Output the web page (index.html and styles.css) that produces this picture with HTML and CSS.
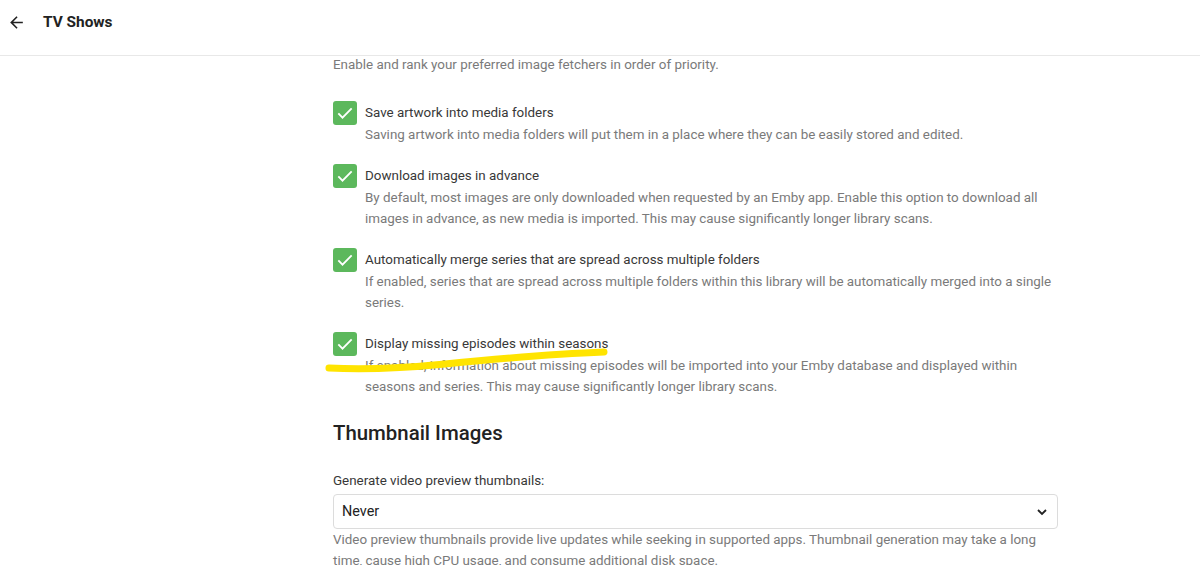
FILE: index.html
```html
<!DOCTYPE html>
<html lang="en">
<head>
    <meta charset="UTF-8">
    <title>TV Shows</title>
    <link rel="stylesheet" href="styles.css">
</head>
<body>
    <header class="topbar">
        <button class="back-btn" aria-label="Back">
            <svg width="19" height="19" viewBox="0 0 24 24"><path d="M20 11H7.83l5.59-5.59L12 4l-8 8 8 8 1.41-1.41L7.83 13H20v-2z" fill="#222"/></svg>
        </button>
        <span class="page-title">TV Shows</span>
    </header>

    <main class="content">
        <p class="intro">Enable and rank your preferred image fetchers in order of priority.</p>

        <div class="options">
            <div class="option">
                <span class="check"><svg width="20" height="20" viewBox="0 0 24 24"><path d="M4 12.5l5 5 11-11" fill="none" stroke="#fff" stroke-width="2.2"/></svg></span>
                <div class="option-text">
                    <div class="option-label">Save artwork into media folders</div>
                    <div class="option-desc">Saving artwork into media folders will put them in a place where they can be easily stored and edited.</div>
                </div>
            </div>
            <div class="option">
                <span class="check"><svg width="20" height="20" viewBox="0 0 24 24"><path d="M4 12.5l5 5 11-11" fill="none" stroke="#fff" stroke-width="2.2"/></svg></span>
                <div class="option-text">
                    <div class="option-label">Download images in advance</div>
                    <div class="option-desc">By default, most images are only downloaded when requested by an Emby app. Enable this option to download all images in advance, as new media is imported. This may cause significantly longer library scans.</div>
                </div>
            </div>
            <div class="option">
                <span class="check"><svg width="20" height="20" viewBox="0 0 24 24"><path d="M4 12.5l5 5 11-11" fill="none" stroke="#fff" stroke-width="2.2"/></svg></span>
                <div class="option-text">
                    <div class="option-label">Automatically merge series that are spread across multiple folders</div>
                    <div class="option-desc">If enabled, series that are spread across multiple folders within this library will be automatically merged into a single series.</div>
                </div>
            </div>
            <div class="option">
                <span class="check"><svg width="20" height="20" viewBox="0 0 24 24"><path d="M4 12.5l5 5 11-11" fill="none" stroke="#fff" stroke-width="2.2"/></svg></span>
                <div class="option-text">
                    <div class="option-label">Display missing episodes within seasons</div>
                    <div class="option-desc">If enabled, information about missing episodes will be imported into your Emby database and displayed within seasons and series. This may cause significantly longer library scans.</div>
                </div>
                <!-- hand-drawn highlight over the option -->
                <svg class="marker" width="300" height="30" viewBox="0 0 300 30"><path d="M4 23 C40 25 80 23 120 19 S220 9 279 7" fill="none" stroke="#ffe400" stroke-width="7" stroke-linecap="round"/></svg>
            </div>
        </div>

        <h2 class="section-title">Thumbnail Images</h2>

        <label class="field-label" for="thumbs">Generate video preview thumbnails:</label>
        <div class="select-wrap">
            <select id="thumbs" class="select">
                <option>Never</option>
            </select>
            <svg class="chevron" width="12" height="12" viewBox="0 0 12 12"><path d="M2 4l4 4 4-4" fill="none" stroke="#222" stroke-width="1.8"/></svg>
        </div>
        <div class="field-desc">Video preview thumbnails provide live updates while seeking in supported apps. Thumbnail generation may take a long time, cause high CPU usage, and consume additional disk space.</div>
    </main>
</body>
</html>
```

FILE: styles.css
```css
* {
    margin: 0;
    padding: 0;
    box-sizing: border-box;
}
body {
    font-family: Roboto, "Noto Sans", Arial, sans-serif;
    color: #333;
    background: #fff;
    overflow: hidden;
}
.topbar {
    height: 56px;
    display: flex;
    align-items: flex-start;
    padding: 11px 0 0 5px;
    border-bottom: 1px solid #e8e8e8;
}
.back-btn {
    width: 22px;
    height: 22px;
    border: none;
    background: none;
    display: flex;
    align-items: center;
    justify-content: center;
    margin-right: 16px;
}
.page-title {
    font-size: 15.4px;
    font-weight: 700;
    color: #222;
    line-height: 22px;
}
.content {
    margin-left: 333px;
    width: 725px;
    font-size: 13.4px;
}
.intro {
    color: #7a7a7a;
    line-height: 21px;
    margin-top: -2px;
}
.options {
    margin-top: 26px;
}
.option {
    display: flex;
    position: relative;
    margin-bottom: 19px;
}
.check {
    width: 24px;
    height: 24px;
    flex: none;
    background: #5cb85c;
    border-radius: 3px;
    display: flex;
    align-items: center;
    justify-content: center;
    margin-right: 8px;
}
.option-text {
    line-height: 21px;
    padding-top: 1px;
}
.option-label {
    color: #383838;
    line-height: 22px;
}
.option-desc {
    color: #7a7a7a;
}
.marker {
    position: absolute;
    left: -8px;
    top: 13px;
}
.section-title {
    font-size: 20.4px;
    font-weight: 500;
    color: #222;
    margin-top: 24px;
    margin-bottom: 26px;
}
.field-label {
    display: block;
    color: #383838;
    line-height: 20px;
    margin-bottom: 3px;
}
.select-wrap {
    position: relative;
}
.select {
    width: 100%;
    height: 35px;
    appearance: none;
    border: 1px solid #dcdcdc;
    border-radius: 4px;
    background: #fff;
    font-family: inherit;
    font-size: 14.4px;
    color: #222;
    padding-left: 8px;
}
.chevron {
    position: absolute;
    right: 10px;
    top: 12px;
}
.field-desc {
    color: #7a7a7a;
    line-height: 21px;
}
```
